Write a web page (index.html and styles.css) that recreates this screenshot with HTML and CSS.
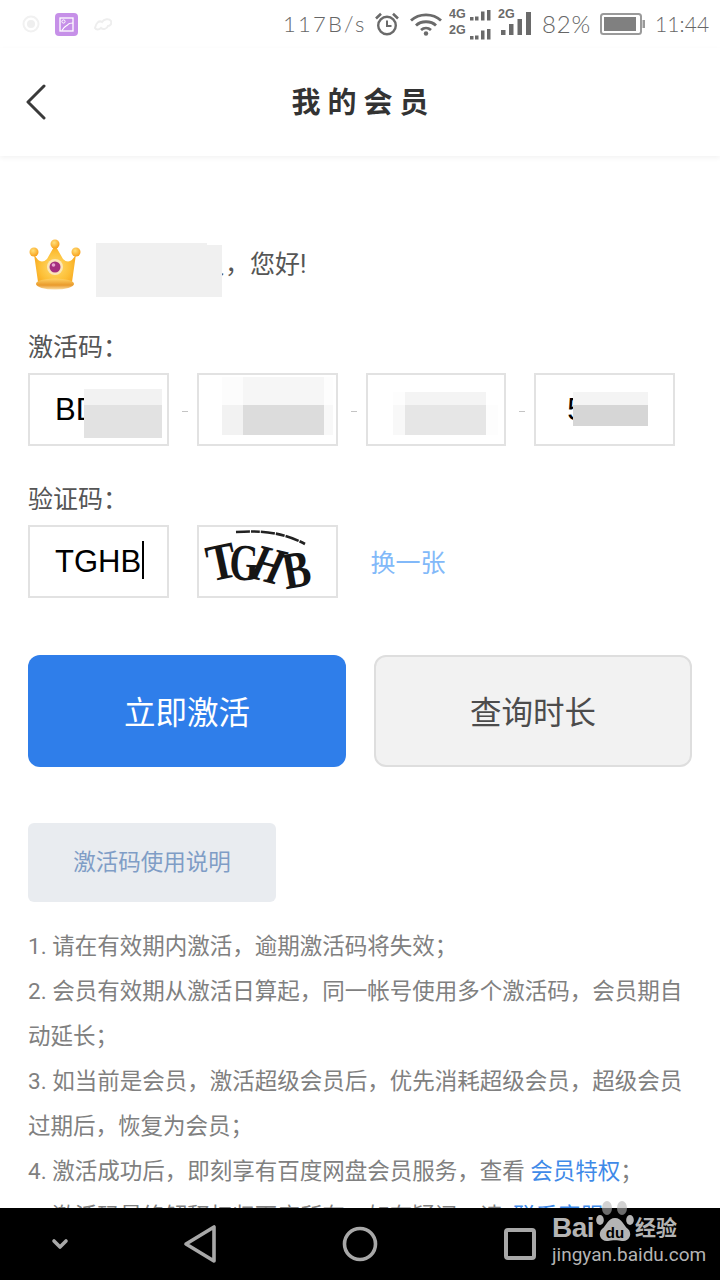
FILE: index.html
```html
<!DOCTYPE html>
<html lang="zh-CN">
<head>
<meta charset="utf-8">
<title>我的会员</title>
<link rel="stylesheet" href="styles.css">
</head>
<body>
<div class="screen">
  <div class="status">
    <div class="status-left">
      <svg class="ic-face" width="18" height="18" viewBox="0 0 18 18"><circle cx="9" cy="9" r="7.500" fill="none" stroke="#f1f1f1" stroke-width="2"/><circle cx="9" cy="9" r="4" fill="#efefef"/></svg>
      <svg class="ic-gallery" width="23" height="23" viewBox="0 0 23 23"><rect width="23" height="23" rx="4" fill="#c690e8"/><rect x="5" y="5" width="13" height="13" fill="none" stroke="#fff" stroke-width="1.300"/><circle cx="8.500" cy="8.500" r="1.600" fill="none" stroke="#fff" stroke-width="1"/><path d="M7 17.500C9 13 12 13 13 11.500S15 10 18 10" fill="none" stroke="#fff" stroke-width="1.200"/></svg>
      <svg class="ic-cloud" width="18" height="14" viewBox="0 0 18 14"><path d="M1 11C2 6 5 3 8 5c2-3 7-4 9-1 1 3-1 5-3 5-1 3-5 4-7 2-2 2-5 2-6 0z" fill="none" stroke="#eeeeee" stroke-width="2"/></svg>
    </div>
    <div class="status-right">
      <span class="st-text st-speed">117B/s</span>
      <svg class="st-alarm" width="26" height="26" viewBox="0 0 26 26" fill="none" stroke="#6a6a6a"><circle cx="13" cy="14.500" r="8.800" stroke-width="2.400"/><path d="M13 9.500v5.500h4.500" stroke-width="2"/><path d="M2 7.500 7 2.800M24 7.500 19 2.800" stroke-width="2.600"/></svg>
      <svg class="st-wifi" width="32" height="24" viewBox="0 0 32 24" fill="none" stroke="#6a6a6a" stroke-width="2.800"><path d="M1 8.500C9 1 23 1 31 8.500"/><path d="M6 13.500C11 8.500 21 8.500 26 13.500"/><path d="M11 18c3-2.600 7-2.600 10 0"/><circle cx="16" cy="21.500" r="2.200" fill="#6a6a6a" stroke="none"/></svg>
      <svg class="st-dual" width="42" height="32" viewBox="0 0 42 32" fill="#6a6a6a"><text class="sig-label" x="0" y="10">4G</text><text class="sig-label" x="0" y="26">2G</text><rect x="21" y="9" width="3.500" height="3.500"/><rect x="26" y="8.500" width="3.500" height="4"/><rect x="32" y="3.500" width="3.500" height="9"/><rect x="38" y="2" width="3.500" height="10.500"/><rect x="21" y="28" width="3.500" height="3.500"/><rect x="26" y="27.500" width="3.500" height="4"/><rect x="32" y="22.500" width="3.500" height="9"/><rect x="38" y="21" width="3.500" height="10.500"/></svg>
      <svg class="st-signal" width="34" height="32" viewBox="0 0 34 32" fill="#6a6a6a"><text class="sig-label" x="1" y="10">2G</text><rect x="4" y="22" width="4.500" height="5"/><rect x="12" y="16" width="4.500" height="11"/><rect x="20.500" y="11" width="4.500" height="16"/><rect x="29" y="4" width="5" height="23"/></svg>
      <span class="st-text st-pct">82%</span>
      <svg class="st-batt" width="45" height="24" viewBox="0 0 45 24"><rect x="1" y="2" width="40" height="20" rx="2.500" fill="none" stroke="#9a9a9a" stroke-width="2"/><rect x="4" y="5" width="32" height="14" fill="#808080"/><rect x="42.500" y="8" width="2.500" height="8" fill="#9a9a9a"/></svg>
      <span class="st-text st-time">11:44</span>
    </div>
  </div>

  <header class="header">
    <svg class="back" width="22" height="36" viewBox="0 0 22 36" fill="none" stroke="#3a3a3a" stroke-width="3" stroke-linecap="round" stroke-linejoin="round"><path d="M19 2 3 18l16 16"/></svg>
    <h1 class="title">我的会员</h1>
  </header>

  <main class="main">
    <div class="greet">
      <svg class="crown" width="54" height="54" viewBox="0 0 54 54">
        <defs>
          <radialGradient id="gold" cx=".5" cy=".55" r=".6"><stop offset="0" stop-color="#ffdc70"/><stop offset=".6" stop-color="#fdc038"/><stop offset="1" stop-color="#f6a21a"/></radialGradient>
          <radialGradient id="ball" cx=".4" cy=".35" r=".7"><stop offset="0" stop-color="#ffe07a"/><stop offset="1" stop-color="#f89c14"/></radialGradient>
          <linearGradient id="band" x1="0" y1="0" x2="0" y2="1"><stop offset="0" stop-color="#ffd263"/><stop offset=".6" stop-color="#e99a2c"/><stop offset="1" stop-color="#fbdca0"/></linearGradient>
        </defs>
        <path d="M6 16Q12 28 19 21L27 7 35 21Q42 28 48 16L44 44Q27 50 10 44Z" fill="url(#gold)"/>
        <ellipse cx="27" cy="46" rx="19" ry="5.500" fill="url(#band)"/>
        <circle cx="27" cy="6" r="4.500" fill="url(#ball)"/>
        <circle cx="6" cy="14" r="4.500" fill="url(#ball)"/>
        <circle cx="48" cy="14" r="4.500" fill="url(#ball)"/>
        <circle cx="27" cy="29" r="8" fill="#fbe6b8"/>
        <circle cx="27" cy="29" r="5.500" fill="#a5307f"/>
        <circle cx="25.500" cy="27" r="1.800" fill="#e7a5d2"/>
      </svg>
      <div class="greet-text">
        <span class="greet-mosaic"></span>
        尊敬的会员，您好!
      </div>
    </div>

    <div class="label">激活码：</div>
    <div class="code-row">
      <div class="box box-dash"><span class="val">BD</span><span class="mosaic m1"></span></div>
      <div class="box box-dash"><span class="mosaic m2"></span></div>
      <div class="box box-dash"><span class="mosaic m3"></span></div>
      <div class="box"><span class="val val-last">5</span><span class="mosaic m4"></span></div>
    </div>

    <div class="label label-second">验证码：</div>
    <div class="code-row">
      <div class="box"><span class="val">TGHB</span><span class="caret"></span></div>
      <div class="box captcha">
        <svg class="captcha-arc" width="72" height="18" viewBox="0 0 72 18"><path d="M1 3C20 2 44 1 70 15" fill="none" stroke="#222" stroke-width="2.600" stroke-dasharray="14 1 9 1"/></svg>
        <span class="cap cap-t">T</span><span class="cap cap-g">G</span><span class="cap cap-h">H</span><span class="cap cap-b">B</span>
      </div>
      <div class="swap">换一张</div>
    </div>

    <div class="actions">
      <div class="btn btn-primary">立即激活</div>
      <div class="btn btn-ghost">查询时长</div>
    </div>

    <div class="tag">激活码使用说明</div>

    <ol class="notes">
      <li>1. 请在有效期内激活，逾期激活码将失效；</li>
      <li>2. 会员有效期从激活日算起，同一帐号使用多个激活码，会员期自动延长；</li>
      <li>3. 如当前是会员，激活超级会员后，优先消耗超级会员，超级会员过期后，恢复为会员；</li>
      <li>4. 激活成功后，即刻享有百度网盘会员服务，查看 <span class="link">会员特权</span>；</li>
      <li>5. 激活码最终解释权归百度所有，如有疑问，请&nbsp;&nbsp;<span class="link">联系客服</span></li>
    </ol>
  </main>

  <nav class="navbar">
    <svg class="nav-chevron" width="18" height="12" viewBox="0 0 18 12" fill="none" stroke="#a8a8a8" stroke-width="3.600" stroke-linecap="round" stroke-linejoin="round"><path d="M3 3l6 6 6-6"/></svg>
    <svg width="34" height="40" viewBox="0 0 34 40" fill="none" stroke="#a8a8a8" stroke-width="3.600" stroke-linejoin="round"><path d="M31 3v34L3 20z"/></svg>
    <svg width="36" height="36" viewBox="0 0 36 36" fill="none" stroke="#a8a8a8" stroke-width="3.600"><circle cx="18" cy="18" r="15.500"/></svg>
    <svg width="32" height="32" viewBox="0 0 32 32" fill="none" stroke="#a8a8a8" stroke-width="4"><rect x="2" y="2" width="28" height="28" rx="2"/></svg>
    <div class="watermark">
      <div class="wm-top">
        <span class="wm-bai">Bai</span>
        <svg class="wm-paw" width="38" height="44" viewBox="0 0 38 44">
          <ellipse cx="11" cy="8" rx="5" ry="7" fill="#b4b4b4" fill-opacity=".6"/>
          <ellipse cx="26" cy="8" rx="5" ry="7" fill="#b4b4b4" fill-opacity=".6"/>
          <ellipse cx="4" cy="20" rx="3.800" ry="5" fill="#b4b4b4"/>
          <ellipse cx="34" cy="20" rx="3.800" ry="5" fill="#b4b4b4"/>
          <path d="M19 18C12 18 11 25 6 29 1 34 5 42 12 41 16 40 22 40 26 41 33 42 37 34 32 29 27 25 26 18 19 18Z" fill="#b4b4b4"/>
          <text class="wm-du" x="19" y="38">du</text>
        </svg>
        <span class="wm-jy">经验</span>
      </div>
      <div class="wm-url">jingyan.baidu.com</div>
    </div>
  </nav>
</div>
</body>
</html>
```

FILE: styles.css
```css
* { box-sizing: border-box; }
html, body { margin: 0; padding: 0; background: #fff; }
body { font-family: "Roboto", "Noto Sans CJK SC", "Liberation Sans", sans-serif; }

.screen { position: relative; width: 720px; height: 1280px; overflow: hidden; background: #fff; }

/* status bar */
.status { height: 48px; display: flex; justify-content: space-between; align-items: center; padding: 0 12px 0 22px; }
.status-left { display: flex; align-items: center; }
.ic-gallery { margin-left: 15px; }
.ic-cloud { margin-left: 16px; }
.status-right { display: flex; align-items: center; }
.st-text { font-family: "Lato", "Liberation Sans", sans-serif; font-weight: 300; font-size: 22px; color: #666; line-height: 26px; white-space: nowrap; }
.st-speed { letter-spacing: 2.200px; width: 81px; }
.st-alarm { margin-left: 10px; }
.st-wifi { margin-left: 10px; }
.st-dual { margin-left: 7px; }
.st-signal { margin-left: 6px; }
.st-pct { margin-left: 11px; width: 50px; font-size: 24px; letter-spacing: .8px; }
.st-batt { margin-left: 8px; }
.st-time { margin-left: 10px; width: 53px; font-size: 21px; letter-spacing: .1px; }
.sig-label { font-family: "Liberation Sans", sans-serif; font-weight: 700; font-size: 12.500px; }

/* header */
.header { position: relative; height: 108px; display: flex; align-items: center; justify-content: center; background: #fff; box-shadow: 0 2px 5px rgba(0, 0, 0, .05); z-index: 1; }
.back { position: absolute; left: 25px; top: 36px; }
.title { margin: 2px -7px 0 0; font-size: 29px; line-height: 36px; font-weight: 700; letter-spacing: 7px; color: #333; }

/* body */
.main { height: 1052px; overflow: hidden; padding: 82px 28px 0; }
.greet { display: flex; align-items: flex-start; height: 54px; gap: 14px; }
.greet-text { position: relative; font-size: 25px; line-height: 50px; color: #555; padding: 2px 0 0 4px; white-space: nowrap; }
.greet-mosaic { position: absolute; left: 0; top: 5px; width: 126px; height: 54px; background:
  linear-gradient(#f0f0f0, #f0f0f0) 0 0 / 111px 54px no-repeat,
  linear-gradient(#f0f0f0, #f0f0f0) 111px 2px / 15px 52px no-repeat; }

.label { margin-top: 41px; font-size: 25px; line-height: 30px; color: #555; }
.label-second { margin-top: 39px; }

.code-row { margin-top: 10px; display: grid; grid-template-columns: repeat(4, 1fr); gap: 28px; width: 647px; }
.box { position: relative; height: 73px; border: 2px solid #e2e2e2; background: #fff; padding-left: 25px; font-family: "Liberation Sans", sans-serif; font-size: 31px; line-height: 69px; color: #000; display: flex; }
.box-dash::after { content: ""; position: absolute; right: -21px; top: 36px; width: 6px; height: 1px; background: #c4c4c4; }
.val { white-space: nowrap; }
.val-last { margin-left: 6px; }
.caret { width: 2px; height: 38px; margin: 14px 0 0 1px; background: #000; }

.mosaic { position: absolute; display: block; }
.m1 { left: 54px; top: 14px; width: 78px; height: 49px; background: linear-gradient(#f2f2f2 16px, #e2e2e2 16px); }
.m2 { left: 23px; top: 2px; width: 111px; height: 58px; background:
  linear-gradient(#f6f6f6, #f6f6f6) 21px 0 / 81px 28px no-repeat,
  linear-gradient(#dcdcdc, #dcdcdc) 21px 28px / 81px 30px no-repeat,
  linear-gradient(#fcfcfc, #fcfcfc) 0 0 / 21px 28px no-repeat,
  linear-gradient(#f2f2f2, #f2f2f2) 0 28px / 21px 30px no-repeat,
  linear-gradient(#fdfdfd, #fdfdfd) 102px 0 / 9px 28px no-repeat,
  linear-gradient(#f8f8f8, #f8f8f8) 102px 28px / 9px 30px no-repeat; }
.m3 { left: 25px; top: 17px; width: 105px; height: 43px; background:
  linear-gradient(#f4f4f4, #f4f4f4) 12px 0 / 81px 13px no-repeat,
  linear-gradient(#e6e6e6, #e6e6e6) 12px 13px / 81px 30px no-repeat,
  linear-gradient(#fdfdfd, #fdfdfd) 0 0 / 12px 13px no-repeat,
  linear-gradient(#f8f8f8, #f8f8f8) 0 13px / 12px 30px no-repeat,
  linear-gradient(#fdfdfd, #fdfdfd) 93px 13px / 12px 30px no-repeat; }
.m4 { left: 37px; top: 17px; width: 75px; height: 34px; background: linear-gradient(#f4f4f4 13px, #d6d6d6 13px); }

/* captcha */
.captcha { padding: 0; overflow: hidden; }
.captcha-arc { position: absolute; left: 36px; top: 2px; }
.cap { position: absolute; font-family: "Liberation Serif", serif; font-weight: 700; font-size: 52px; line-height: 52px; color: #151515; transform-origin: center; }
.cap-t { left: 5px; top: 9px; transform: rotate(-12deg) scaleX(.84); }
.cap-g { left: 25px; top: 10px; transform: rotate(2deg) scaleX(.72); }
.cap-h { left: 49px; top: 12px; transform: rotate(14deg) skewX(-10deg) scaleX(.72); }
.cap-b { left: 80px; top: 17px; transform: rotate(-10deg) scaleX(.8); }
.swap { height: 73px; padding: 2px 0 0 5px; font-size: 25px; line-height: 73px; color: #82b9f9; white-space: nowrap; }

/* buttons */
.actions { margin-top: 57px; display: flex; gap: 28px; width: 664px; }
.btn { flex: none; width: 318px; height: 112px; padding-bottom: 3px; border-radius: 12px; display: flex; align-items: center; justify-content: center; font-size: 31.500px; }
.btn-primary { background: #2f7eea; color: #fff; }
.btn-ghost { background: #f2f2f2; border: 2px solid #dedede; color: #4c4c4c; }

/* notes */
.tag { margin-top: 56px; width: 248px; height: 79px; padding-bottom: 5px; border-radius: 6px; background: #e9ecf0; color: #7f9dc6; font-size: 22.500px; display: flex; align-items: center; justify-content: center; }
.notes { margin: 22px 0 0; padding: 0; list-style: none; font-size: 22.500px; line-height: 45px; color: #808080; width: 664px; }
.link { color: #3f8ae8; }

/* navigation bar */
.navbar { position: absolute; left: 0; right: 0; bottom: 0; height: 72px; background: #000; display: grid; grid-template-columns: 120px 160px 160px 160px 120px; align-items: center; justify-items: center; }
.watermark { position: absolute; left: 552px; top: -8px; width: 130px; color: #b4b4b4; }
.wm-top { display: flex; align-items: flex-end; height: 44px; }
.wm-bai { font-family: "Liberation Sans", sans-serif; font-weight: 700; font-size: 28px; line-height: 32px; letter-spacing: -.5px; width: 44px; }
.wm-paw { flex: none; }
.wm-du { font-family: "Liberation Sans", sans-serif; font-weight: 700; font-size: 15px; text-anchor: middle; fill: #000; }
.wm-jy { font-weight: 700; font-size: 21px; line-height: 32px; white-space: nowrap; margin-left: 1px; }
.wm-url { font-family: "Roboto", sans-serif; font-size: 19px; line-height: 20px; margin-top: 1px; white-space: nowrap; }
```
